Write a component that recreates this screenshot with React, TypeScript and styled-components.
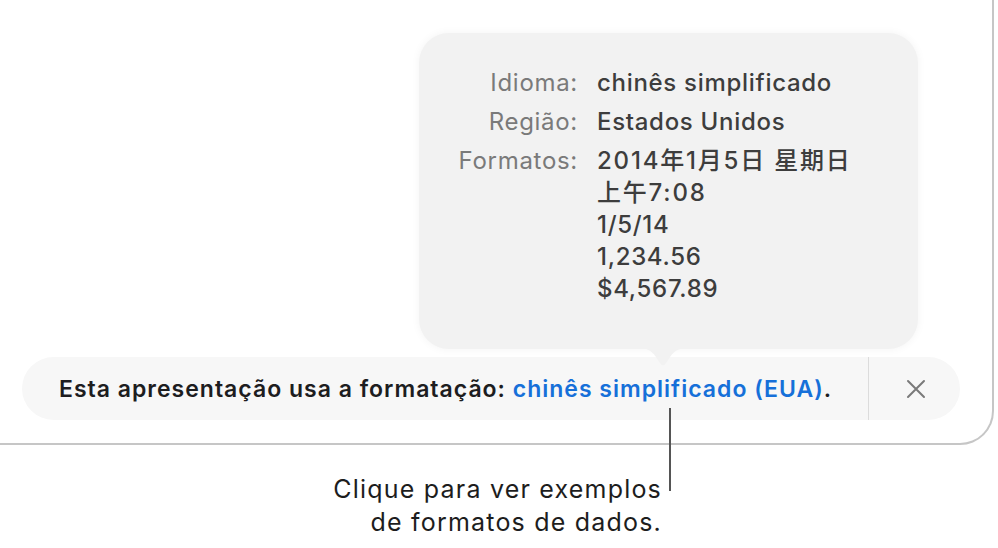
import React from 'react';
import styled, { createGlobalStyle } from 'styled-components';

const GlobalStyle = createGlobalStyle`
  html, body {
    margin: 0;
    padding: 0;
    background: #ffffff;
  }
  body {
    font-family: Inter, "Noto Sans", "Noto Sans CJK SC", sans-serif;
    -webkit-font-smoothing: antialiased;
  }
`;

const Page = styled.div`
  position: relative;
  width: 998px;
  height: 548px;
  overflow: hidden;
`;

const Window = styled.div`
  position: relative;
  box-sizing: border-box;
  width: 994px;
  height: 445px;
  border-right: 2px solid #c6c6c6;
  border-bottom: 2px solid #c6c6c6;
  border-bottom-right-radius: 34px;
  display: flex;
  flex-direction: column;
  justify-content: flex-end;
  padding: 0 32px 23px 22px;
`;

const Bar = styled.div`
  display: flex;
  align-items: stretch;
  height: 63px;
  border-radius: 32px;
  background: #f7f7f7;
`;

const Message = styled.div`
  flex: 1;
  display: flex;
  align-items: center;
  padding-left: 37px;
  font-size: 23px;
  font-weight: 600;
  color: #1d1d1f;
  letter-spacing: 1px;
  white-space: pre;
`;

const LinkText = styled.span`
  color: #1670d9;
`;

const Divider = styled.div`
  width: 1px;
  background: #dcdcdc;
`;

const CloseButton = styled.button`
  width: 91px;
  border: none;
  background: transparent;
  display: flex;
  align-items: center;
  justify-content: center;
  padding: 0 0 0 2px;
  cursor: pointer;
`;

const Popover = styled.div`
  position: absolute;
  left: 419px;
  top: 33px;
  box-sizing: border-box;
  width: 499px;
  height: 316px;
  border-radius: 30px;
  background: #f2f2f2;
  box-shadow: 0 0 8px rgba(0, 0, 0, 0.05);
  padding: 34px 0 0 30px;
`;

const Pointer = styled.svg`
  position: absolute;
  left: 218px;
  bottom: -19px;
`;

const InfoGrid = styled.div`
  display: grid;
  grid-template-columns: 129px auto;
  column-gap: 19px;
  row-gap: 7px;
  font-size: 24px;
  line-height: 32px;
  letter-spacing: 0.7px;
`;

const Label = styled.div`
  text-align: right;
  color: #7a7a7a;
  font-weight: 400;
  white-space: nowrap;
`;

const Value = styled.div`
  color: #3d3d3d;
  font-weight: 500;
  white-space: nowrap;
`;

const WideLine = styled.span`
  letter-spacing: 1.8px;
`;

const Caption = styled.div`
  box-sizing: border-box;
  width: 662px;
  margin-top: 28px;
  text-align: right;
  font-size: 25px;
  line-height: 33px;
  color: #1d1d1d;
  letter-spacing: 1.2px;
  white-space: nowrap;
`;

const CalloutLine = styled.div`
  position: absolute;
  left: 669px;
  top: 408px;
  width: 2px;
  height: 83px;
  background: #555555;
`;

const App: React.FC = () => {
  return (
    <Page>
      <GlobalStyle />
      <Window>
        <Bar>
          <Message>
            Esta apresentação usa a formatação: <LinkText>chinês simplificado (EUA)</LinkText>.
          </Message>
          <Divider />
          <CloseButton aria-label="Fechar">
            <svg width="20" height="20" viewBox="0 0 20 20">
              <path d="M2 2 L18 18 M18 2 L2 18" stroke="#7a7a7a" strokeWidth="2" strokeLinecap="round" />
            </svg>
          </CloseButton>
        </Bar>
        <Popover>
          <InfoGrid>
            <Label>Idioma:</Label>
            <Value>chinês simplificado</Value>
            <Label>Região:</Label>
            <Value>Estados Unidos</Value>
            <Label>Formatos:</Label>
            <Value>
              <WideLine>2014年1月5日 星期日</WideLine>
              <br />
              <WideLine>上午7:08</WideLine>
              <br />
              1/5/14
              <br />
              1,234.56
              <br />
              $4,567.89
            </Value>
          </InfoGrid>
          <Pointer width="52" height="20" viewBox="0 0 52 20">
            <path d="M0 0 C10 0 14 2 19 9 L23 15 C25 18 27 18 29 15 L33 9 C38 2 42 0 52 0 Z" fill="#f2f2f2" />
          </Pointer>
        </Popover>
      </Window>
      <Caption>
        Clique para ver exemplos
        <br />
        de formatos de dados.
      </Caption>
      <CalloutLine />
    </Page>
  );
};

export default App;
